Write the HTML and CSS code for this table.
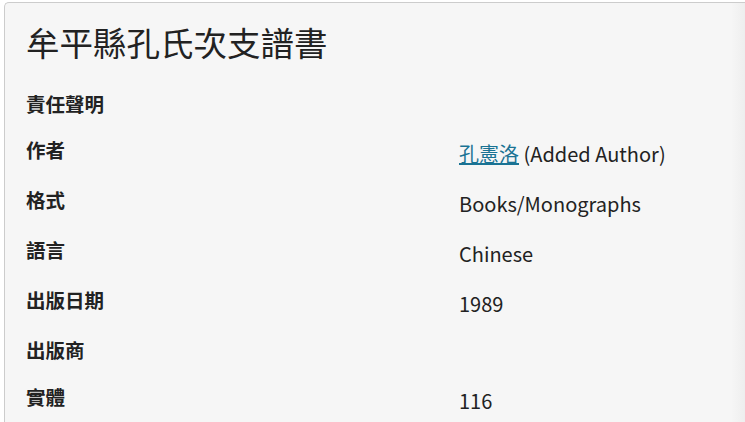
FILE: index.html
```html
<!DOCTYPE html>
<html lang="zh-Hant">
<head>
<meta charset="utf-8">
<title>牟平縣孔氏次支譜書</title>
<link rel="stylesheet" href="styles.css">
</head>
<body>
<div class="panel">
  <h1 class="title">牟平縣孔氏次支譜書</h1>
  <dl class="record">
    <div class="row"><dt>責任聲明</dt><dd></dd></div>
    <div class="row"><dt>作者</dt><dd><a href="#">孔憲洛</a> (Added Author)</dd></div>
    <div class="row"><dt>格式</dt><dd>Books/Monographs</dd></div>
    <div class="row"><dt>語言</dt><dd>Chinese</dd></div>
    <div class="row"><dt>出版日期</dt><dd>1989</dd></div>
    <div class="row"><dt>出版商</dt><dd></dd></div>
    <div class="row"><dt>實體</dt><dd>116</dd></div>
  </dl>
</div>
</body>
</html>
```
FILE: styles.css
```css
html, body {
  margin: 0;
  padding: 0;
  background: #ffffff;
  overflow: hidden;
}
body {
  font-family: "Noto Sans CJK TC", "Noto Sans", sans-serif;
  color: #222222;
}
.panel {
  margin: 2px 0 0 4px;
  border: 1px solid #cccccc;
  border-right: none;
  border-radius: 5px 0 0 0;
  background: linear-gradient(to right, #f6f6f6 calc(100% - 14px), #eeeeee);
  padding: 19px 0 40px 21px;
  min-height: 500px;
}
.title {
  margin: 0 0 28.5px 0;
  font-size: 33.5px;
  font-weight: 400;
  line-height: 40px;
  color: #222222;
}
.record {
  margin: 0;
}
.row {
  display: grid;
  grid-template-columns: 433px 1fr;
  margin-bottom: 20px;
}
dt {
  font-weight: 700;
  font-size: 19.5px;
  line-height: 26.5px;
}
dd {
  margin: 0;
  font-size: 20px;
  line-height: 27px;
  padding-top: 3px;
}
dd:empty {
  padding-top: 0;
}
dd a {
  color: #1a7394;
  text-decoration: underline;
}
```
